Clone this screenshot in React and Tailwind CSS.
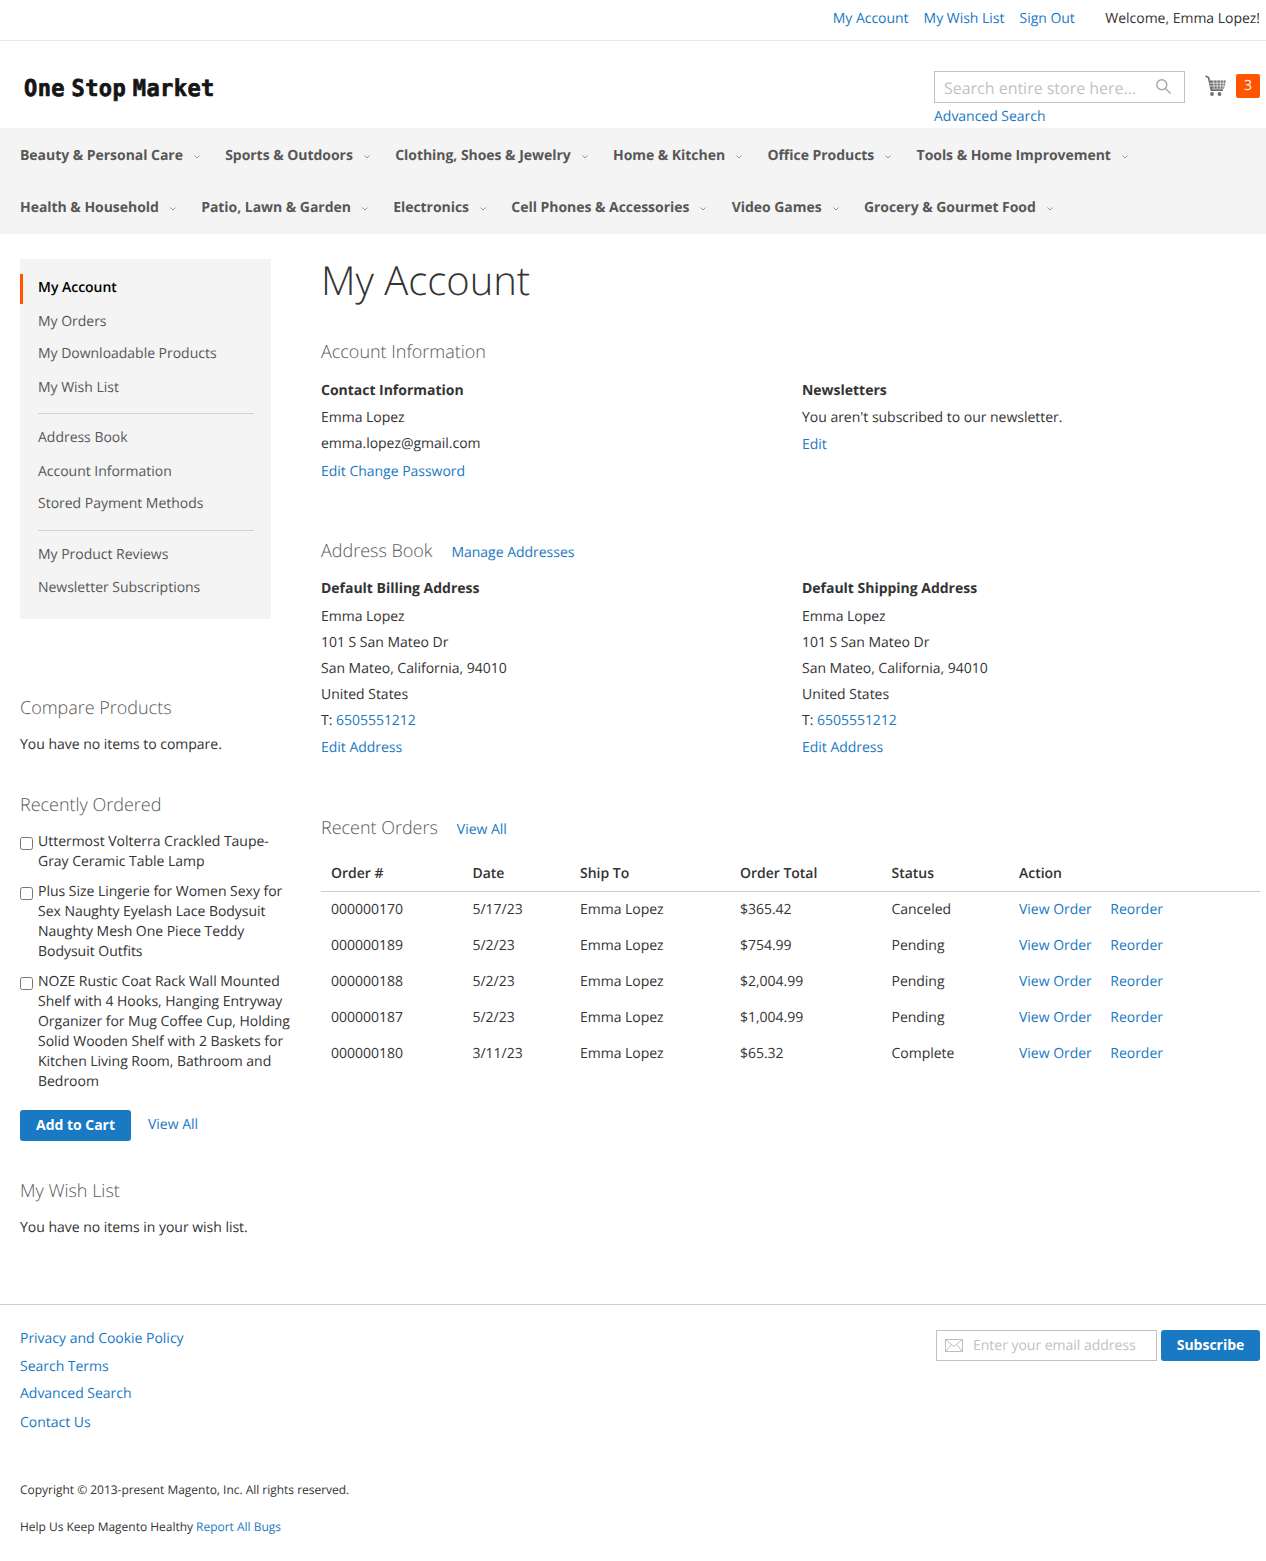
const navItems = [
  'Beauty & Personal Care',
  'Sports & Outdoors',
  'Clothing, Shoes & Jewelry',
  'Home & Kitchen',
  'Office Products',
  'Tools & Home Improvement',
  'Health & Household',
  'Patio, Lawn & Garden',
  'Electronics',
  'Cell Phones & Accessories',
  'Video Games',
  'Grocery & Gourmet Food',
];

const sideItems = [
  { label: 'My Account', cls: 'mt-0', active: true },
  { label: 'My Orders', cls: 'mt-[10px]' },
  { label: 'My Downloadable Products', cls: 'mt-[8px]' },
  { label: 'My Wish List', cls: 'mt-[10px]' },
  { divider: true, cls: 'mt-[14px]' },
  { label: 'Address Book', cls: 'mt-[11px]' },
  { label: 'Account Information', cls: 'mt-[10px]' },
  { label: 'Stored Payment Methods', cls: 'mt-[8px]' },
  { divider: true, cls: 'mt-[15px]' },
  { label: 'My Product Reviews', cls: 'mt-[11px]' },
  { label: 'Newsletter Subscriptions', cls: 'mt-[9px]' },
];

const recentlyOrdered = [
  'Uttermost Volterra Crackled Taupe-Gray Ceramic Table Lamp',
  'Plus Size Lingerie for Women Sexy for Sex Naughty Eyelash Lace Bodysuit Naughty Mesh One Piece Teddy Bodysuit Outfits',
  'NOZE Rustic Coat Rack Wall Mounted Shelf with 4 Hooks, Hanging Entryway Organizer for Mug Coffee Cup, Holding Solid Wooden Shelf with 2 Baskets for Kitchen Living Room, Bathroom and Bedroom',
];

const orders = [
  ['000000170', '5/17/23', 'Emma Lopez', '$365.42', 'Canceled'],
  ['000000189', '5/2/23', 'Emma Lopez', '$754.99', 'Pending'],
  ['000000188', '5/2/23', 'Emma Lopez', '$2,004.99', 'Pending'],
  ['000000187', '5/2/23', 'Emma Lopez', '$1,004.99', 'Pending'],
  ['000000180', '3/11/23', 'Emma Lopez', '$65.32', 'Complete'],
];

function A({ children, className = '' }) {
  return <a href="#" className={`text-[#1979c3] ${className}`}>{children}</a>;
}

function Line({ children, className = '' }) {
  return <div className={`h-[26px] leading-[28px] ${className}`}>{children}</div>;
}

function Heading({ children, className = '' }) {
  return <div className={`h-[26px] leading-[27px] text-lg font-light ${className}`}>{children}</div>;
}

function Address({ title }) {
  return (
    <div>
      <Line className="font-bold">{title}</Line>
      <Line className="mt-[2px]">Emma Lopez</Line>
      <Line>101 S San Mateo Dr</Line>
      <Line>San Mateo, California, 94010</Line>
      <Line>United States</Line>
      <Line>T: <A>6505551212</A></Line>
      <Line className="mt-[1px]"><A>Edit Address</A></Line>
    </div>
  );
}

function CartIcon() {
  return (
    <svg width="21" height="22" viewBox="0 0 21 22" fill="none">
      <path d="M0.5 1 L3.6 2.6 L6.3 15.2 H18" stroke="#707070" strokeWidth="1.7" />
      <path d="M4 5.5 H20.8 L19 13.8 H5.8 Z" fill="#707070" />
      <path d="M4.5 8.2 H20.4 M5 11 H19.8" stroke="#fff" strokeWidth="0.7" />
      <path d="M8.6 5.5 L9.2 13.8 M12 5.5 L12.2 13.8 M15.4 5.5 L15.2 13.8 M18.4 5.5 L17.8 13.8" stroke="#fff" strokeWidth="0.7" />
      <circle cx="7" cy="19" r="1.9" fill="#707070" />
      <circle cx="14.5" cy="19" r="1.9" fill="#707070" />
    </svg>
  );
}

function Header() {
  return (
    <header>
      <div className="h-[41px] flex items-center justify-end border-b border-[#e8e8e8] pr-[6px] pb-[3px]">
        <A>My Account</A>
        <A className="ml-[15px]">My Wish List</A>
        <A className="ml-[15px]">Sign Out</A>
        <span className="ml-[30.5px]">Welcome, Emma Lopez!</span>
      </div>
      <div className="h-[87px] flex justify-between pl-[24px] pr-[6px]">
        <div className="mt-[35px] h-[28px] leading-[28px] text-[22px] font-bold text-[#151515] scale-y-[1.05] [font-family:'DejaVu_Sans_Mono',monospace] tracking-[0.4px] [word-spacing:-7px] [-webkit-text-stroke:0.7px_#151515]">
          One Stop Market
        </div>
        <div className="flex">
          <div className="mt-[30px] w-[251px]">
            <div className="h-[32px] border border-[#c2c2c2] flex items-center justify-between pl-[9px] pr-[13px] pt-[2px] text-base text-[#c2c2c2]">
              <span>Search entire store here...</span>
              <svg className="mb-[3px]" width="15" height="15" viewBox="0 0 15 15" fill="none" stroke="#a6a6a6" strokeWidth="1.4">
                <circle cx="5.8" cy="5.8" r="5" />
                <path d="M9.5 9.5 L14.5 14.5" />
              </svg>
            </div>
            <div className="h-[25px] leading-[28px]"><A>Advanced Search</A></div>
          </div>
          <div className="ml-[20px] mt-[34px] w-[21px]"><CartIcon /></div>
          <div className="ml-[10px] mt-[33px] w-[24px] h-[24px] rounded-[2px] bg-[#ff5501] text-white flex items-center justify-center">3</div>
        </div>
      </div>
      <nav className="h-[106px] bg-[#f4f4f4] pl-[20px] pt-[2px] flex flex-wrap content-start tracking-[-0.04px]">
        {navItems.map((item) => (
          <div key={item} className="h-[52px] mr-[25.3px] flex items-center font-bold text-[#575757]">
            <span>{item}</span>
            <svg className="ml-[11px] mt-[1px]" width="6" height="4" viewBox="0 0 6 4" fill="none">
              <path d="M0.5 0.5 L3 3 L5.5 0.5" stroke="#8a8a8a" strokeWidth="0.9" />
            </svg>
          </div>
        ))}
      </nav>
    </header>
  );
}

function Sidebar() {
  return (
    <aside className="w-[271px] shrink-0 ml-[20px] mr-[30px]">
      <div className="w-[251px] h-[360px] bg-[#f4f4f4] pt-[16px] pl-[18px] pr-[17px]">
        {sideItems.map((item, i) =>
          item.divider ? (
            <div key={i} className={`h-px bg-[#d1d1d1] ${item.cls}`} />
          ) : (
            <div key={i} className={`relative h-[24px] leading-[26px] ${item.cls} ${item.active ? 'font-semibold text-black' : 'text-[#575757]'}`}>
              {item.active && <span className="absolute left-[-18px] top-[-1px] w-[3px] h-[30px] bg-[#ff5501]" />}
              {item.label}
            </div>
          )
        )}
      </div>
      <Heading className="mt-[76px] text-[#575757]">Compare Products</Heading>
      <Line className="mt-[10px]">You have no items to compare.</Line>
      <Heading className="mt-[35px] text-[#575757]">Recently Ordered</Heading>
      <div className="mt-[13px] flex flex-col gap-[10px]">
        {recentlyOrdered.map((name) => (
          <label key={name} className="flex items-start leading-[20px]">
            <input type="checkbox" className="w-[13px] h-[13px] mt-[6px] ml-0 mr-[5px] shrink-0" />
            <span className="pt-px -mb-px">{name}</span>
          </label>
        ))}
      </div>
      <div className="mt-[19px] flex items-center">
        <button className="w-[111px] h-[31px] pb-[2px] rounded-[3px] bg-[#1979c3] text-white font-bold">Add to Cart</button>
        <A className="ml-[17px] mb-[2px]">View All</A>
      </div>
      <Heading className="mt-[37px] text-[#575757]">My Wish List</Heading>
      <Line className="mt-[10px]">You have no items in your wish list.</Line>
    </aside>
  );
}

function OrdersTable() {
  return (
    <table className="mt-[14px] w-full table-fixed border-collapse text-left">
      <thead>
        <tr className="h-[36px] border-b border-[#ccc]">
          <th className="w-[141.5px] pl-[10px] pt-[2px] font-semibold">Order #</th>
          <th className="w-[107.5px] pl-[10px] pt-[2px] font-semibold">Date</th>
          <th className="w-[160px] pl-[10px] pt-[2px] font-semibold">Ship To</th>
          <th className="w-[151.5px] pl-[10px] pt-[2px] font-semibold">Order Total</th>
          <th className="w-[127.5px] pl-[10px] pt-[2px] font-semibold">Status</th>
          <th className="pl-[10px] pt-[2px] font-semibold">Action</th>
        </tr>
      </thead>
      <tbody>
        {orders.map((row) => (
          <tr key={row[0]} className="h-[36px]">
            {row.map((cell, i) => (
              <td key={i} className="pl-[10px] pt-[2px]">{cell}</td>
            ))}
            <td className="pl-[10px] pt-[2px]">
              <A>View Order</A>
              <A className="ml-[18.5px]">Reorder</A>
            </td>
          </tr>
        ))}
      </tbody>
    </table>
  );
}

function Main() {
  return (
    <main className="flex-1 min-w-0 pr-[6px]">
      <h1 className="h-[44px] leading-[42px] text-[40px] font-light">My Account</h1>
      <Heading className="mt-[36px] text-[#575757]">Account Information</Heading>
      <div className="mt-[12px] grid grid-cols-[481px_1fr]">
        <div>
          <Line className="font-bold">Contact Information</Line>
          <Line className="mt-[1px]">Emma Lopez</Line>
          <Line>emma.lopez@gmail.com</Line>
          <Line className="mt-[2px]"><A>Edit</A> <A>Change Password</A></Line>
        </div>
        <div>
          <Line className="font-bold">Newsletters</Line>
          <Line className="mt-[1px]">You aren't subscribed to our newsletter.</Line>
          <Line className="mt-[1px]"><A>Edit</A></Line>
        </div>
      </div>
      <div className="mt-[54px] h-[26px] flex items-center">
        <Heading className="text-[#575757]">Address Book</Heading>
        <A className="ml-[19px] mt-[4px]">Manage Addresses</A>
      </div>
      <div className="mt-[11px] grid grid-cols-[481px_1fr]">
        <Address title="Default Billing Address" />
        <Address title="Default Shipping Address" />
      </div>
      <div className="mt-[55px] h-[26px] flex items-center">
        <Heading className="text-[#575757]">Recent Orders</Heading>
        <A className="ml-[19px] mt-[4px]">View All</A>
      </div>
      <OrdersTable />
    </main>
  );
}

function Footer() {
  return (
    <footer className="mt-[64px] border-t border-[#ccc] pt-[20px] pb-[21px] pl-[20px] pr-[6px]">
      <div className="flex justify-between">
        <div>
          <Line><A>Privacy and Cookie Policy</A></Line>
          <Line className="mt-[2px]"><A>Search Terms</A></Line>
          <Line className="mt-[1px]"><A>Advanced Search</A></Line>
          <Line className="mt-[3px]"><A>Contact Us</A></Line>
        </div>
        <div className="flex mt-[5px] h-[31px]">
          <div className="w-[221px] border border-[#c2c2c2] flex items-center pl-[8px] text-[#c2c2c2]">
            <svg width="18" height="13" viewBox="0 0 18 13" fill="none" stroke="#bdbdbd" strokeWidth="1">
              <rect x="0.5" y="0.5" width="17" height="12" />
              <path d="M0.5 0.5 L9 7.5 L17.5 0.5 M0.5 12.5 L6.5 5.5 M17.5 12.5 L11.5 5.5" />
            </svg>
            <span className="ml-[10px]">Enter your email address</span>
          </div>
          <button className="ml-[4px] w-[99px] pb-[2px] rounded-[3px] bg-[#1979c3] text-white font-bold">Subscribe</button>
        </div>
      </div>
      <div className="mt-[42px] h-[26px] leading-[26px] text-xs">Copyright © 2013-present Magento, Inc. All rights reserved.</div>
      <div className="mt-[11px] h-[26px] leading-[26px] text-xs">Help Us Keep Magento Healthy <A>Report All Bugs</A></div>
    </footer>
  );
}

export default function App() {
  return (
    <div className="bg-white text-[#333] text-sm tracking-[-0.02px] [font-family:'Open_Sans',sans-serif] [text-rendering:geometricPrecision]">
      <Header />
      <div className="flex pt-[25px]">
        <Sidebar />
        <Main />
      </div>
      <Footer />
    </div>
  );
}
